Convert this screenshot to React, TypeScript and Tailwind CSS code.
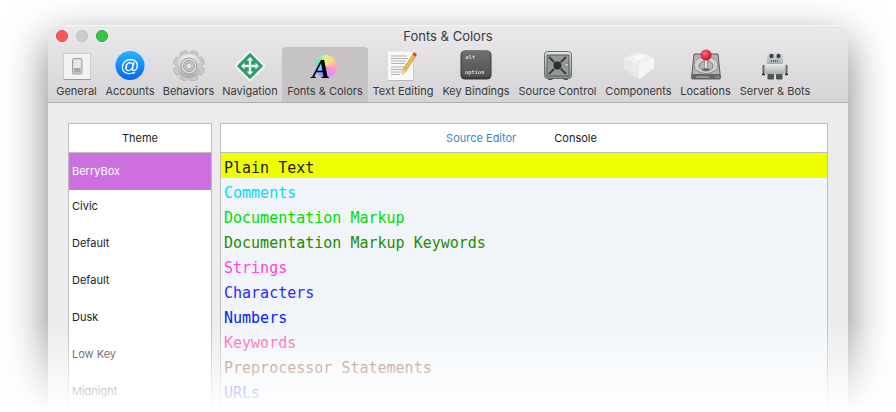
const ui = { fontFamily: "Inter, sans-serif" };

function General() {
  return (
    <svg width="32" height="32" viewBox="0 0 32 32">
      <rect x="2.5" y="4.5" width="27" height="26" fill="#f3f2f3" stroke="#cfcecf" />
      <path d="M2.5 30.5h27" stroke="#9c9b9c" />
      <rect x="11.5" y="9.5" width="9.5" height="15.5" rx="1" fill="#d4d4d4" stroke="#a2a2a2" />
      <rect x="13" y="11" width="6.5" height="8" fill="#e9e9e9" />
      <rect x="13" y="19" width="6.5" height="4.5" fill="#a8a8a8" />
    </svg>
  );
}

function Accounts() {
  return (
    <svg width="32" height="32" viewBox="0 0 32 32">
      <defs>
        <linearGradient id="acc" x1="0" y1="0" x2="0" y2="1">
          <stop offset="0" stopColor="#25b6ff" />
          <stop offset="1" stopColor="#0566f0" />
        </linearGradient>
      </defs>
      <circle cx="16" cy="16.5" r="14.5" fill="url(#acc)" />
      <text x="16" y="22.5" textAnchor="middle" fontSize="19" fill="#fff" fontFamily="Liberation Sans, sans-serif">@</text>
    </svg>
  );
}

function Behaviors() {
  const teeth = [22.5, 67.5, 112.5, 157.5, 202.5, 247.5, 292.5, 337.5];
  return (
    <svg width="32" height="32" viewBox="0 -1 32 32">
      <defs>
        <linearGradient id="gear" x1="0" y1="0" x2="0" y2="1">
          <stop offset="0" stopColor="#eeeeee" />
          <stop offset="1" stopColor="#a9a9a9" />
        </linearGradient>
      </defs>
      {teeth.map((a) => (
        <rect key={a} x="12" y="0.5" width="8" height="8" rx="2" fill="#c9c9c9" stroke="#9e9e9e" strokeWidth=".5" transform={`rotate(${a} 16 16)`} />
      ))}
      <circle cx="16" cy="16" r="12" fill="url(#gear)" />
      <circle cx="16" cy="16" r="8" fill="#dcdcdc" stroke="#a0a0a0" />
      <circle cx="16" cy="16" r="5.5" fill="#c6c6c6" stroke="#a0a0a0" />
      <circle cx="16" cy="16" r="3" fill="#e4e4e4" stroke="#adadad" />
    </svg>
  );
}

function Navigation() {
  return (
    <svg width="32" height="32" viewBox="0 -1 32 32">
      <rect x="5.7" y="5.7" width="20.6" height="20.6" rx="1" fill="#2f9a70" stroke="#f4f4f4" strokeWidth="2" transform="rotate(45 16 16)" />
      <path d="M16 7L19.5 10.5H17.2V14.8H21.5V12.5L25 16L21.5 19.5V17.2H17.2V21.5H19.5L16 25L12.5 21.5H14.8V17.2H10.5V19.5L7 16L10.5 12.5V14.8H14.8V10.5H12.5Z" fill="#e8f5ef" />
    </svg>
  );
}

function FontsColors() {
  return (
    <div className="relative w-8 h-8">
      <div className="absolute left-[6px] top-[6px] w-[22px] h-[23px] rounded-full bg-[conic-gradient(#e4f28a,#ffd08a,#ff9ac4,#e88aff,#9a8cff,#6fd0ff,#70eea0,#e4f28a)]" />
      <span className="absolute left-[3px] top-[7px] text-[27px] leading-[27px] font-bold italic text-black" style={{ fontFamily: "Liberation Serif, serif" }}>A</span>
    </div>
  );
}

function TextEditing() {
  return (
    <svg width="32" height="32" viewBox="0 0 32 32">
      <rect x="1.5" y="3" width="25" height="29" fill="#000" opacity=".15" />
      <rect x="1" y="2.5" width="25" height="28.5" fill="#f8f8f6" />
      <path d="M4 7h16M4 9.5h17M4 12h15M4 14.5h14M4 18h13M4 20.5h11M4 23h10M4 25.5h9" stroke="#a0a0a0" strokeWidth=".8" />
      <path d="M27 3.5l2.6 2-11 17-3.6 3 .6-4.6z" fill="#f2bd4a" stroke="#8e6a20" strokeWidth=".5" />
      <path d="M15 25.5l.6-4.6 3 1.6z" fill="#eed9b4" />
      <path d="M27 3.5l2.6 2-1.3 2-2.6-2z" fill="#d9323a" />
    </svg>
  );
}

function KeyBindings() {
  return (
    <svg width="32" height="32" viewBox="0 0 32 32">
      <defs>
        <linearGradient id="key" x1="0" y1="0" x2="0" y2="1">
          <stop offset="0" stopColor="#707070" />
          <stop offset="1" stopColor="#505050" />
        </linearGradient>
      </defs>
      <rect x="0.5" y="1.5" width="31" height="29" rx="4.5" fill="#3a3a3a" />
      <rect x="1.5" y="1.5" width="29" height="26.5" rx="4" fill="url(#key)" />
      <text x="5.5" y="9.5" fontSize="5.4" fontWeight="700" fill="#d6d6d6" fontFamily="DejaVu Sans Mono, monospace">alt</text>
      <text x="5" y="25" fontSize="5.4" fontWeight="700" fill="#d6d6d6" fontFamily="DejaVu Sans Mono, monospace">option</text>
    </svg>
  );
}

function SourceControl() {
  return (
    <svg width="32" height="32" viewBox="0 0 32 32">
      <defs>
        <linearGradient id="safe" x1="0" y1="0" x2="0" y2="1">
          <stop offset="0" stopColor="#dfe6e6" />
          <stop offset="1" stopColor="#8a8c8c" />
        </linearGradient>
      </defs>
      <rect x="2.5" y="2.5" width="27" height="27" rx="3" fill="url(#safe)" stroke="#6a6d6d" />
      <rect x="5" y="6" width="22" height="21" fill="#949a9a" stroke="#5a5d5d" />
      <path d="M7 8l17 17M24 8L7 25" stroke="#3c3e3e" strokeWidth="2" />
      <circle cx="15.5" cy="16.5" r="4.5" fill="#2f3131" stroke="#a4a8a8" strokeWidth=".7" />
      <circle cx="24.5" cy="16" r="1.7" fill="#d4d7d7" stroke="#555" strokeWidth=".5" />
      <rect x="6" y="29.5" width="4.5" height="1.5" fill="#5c5c5c" />
      <rect x="21.5" y="29.5" width="4.5" height="1.5" fill="#5c5c5c" />
    </svg>
  );
}

function Components() {
  return (
    <svg width="32" height="32" viewBox="0 0 32 32">
      <path d="M16 2.5L31 9v10L16 30 1 19V9z" fill="#f1f0f1" />
      <path d="M1 9l15 7.5V30L1 19z" fill="#ebeaeb" />
      <path d="M16 16.5V30L31 19V9z" fill="#f6f5f6" />
      <ellipse cx="16" cy="8" rx="6.5" ry="3.5" fill="#f8f8f8" stroke="#e2e1e2" strokeWidth=".6" />
    </svg>
  );
}

function Locations() {
  return (
    <svg width="32" height="32" viewBox="0 0 32 32">
      <defs>
        <radialGradient id="ball" cx=".4" cy=".35" r=".7">
          <stop offset="0" stopColor="#ff6a80" />
          <stop offset="1" stopColor="#c00a20" />
        </radialGradient>
      </defs>
      <path d="M4 5h24l2.5 24h-29z" fill="#b4b4b4" stroke="#5c5c5c" />
      <rect x="1.5" y="25" width="29" height="5.5" rx="1" fill="#666" />
      <path d="M6 28h13" stroke="#bcbcbc" strokeWidth="1" />
      <path d="M25 28h1.5" stroke="#8fa7d8" strokeWidth="1.2" />
      <path d="M27.5 28h1.5" stroke="#e8d060" strokeWidth="1.2" />
      <ellipse cx="16" cy="16" rx="12" ry="8.5" fill="#d2d2d2" stroke="#8a8a8a" />
      <ellipse cx="16" cy="17" rx="7" ry="5" fill="#b5b5b5" stroke="#808080" />
      <rect x="14.7" y="8" width="2.6" height="12" fill="#e2e2e2" stroke="#777" strokeWidth=".5" />
      <ellipse cx="16" cy="20.5" rx="3.5" ry="1.6" fill="#6c6c6c" />
      <circle cx="16" cy="6" r="5.5" fill="url(#ball)" />
    </svg>
  );
}

function ServerBots() {
  return (
    <svg width="32" height="32" viewBox="0 0 32 32">
      <defs>
        <linearGradient id="bot" x1="0" y1="0" x2="0" y2="1">
          <stop offset="0" stopColor="#e2eaea" />
          <stop offset="1" stopColor="#a4acac" />
        </linearGradient>
      </defs>
      <rect x="8" y="2" width="16" height="13" rx="1.5" fill="url(#bot)" />
      <circle cx="12.5" cy="7" r="2.2" fill="#3a4448" />
      <circle cx="19.5" cy="7" r="2.2" fill="#3a4448" />
      <path d="M12 12h8" stroke="#3a4448" strokeWidth="1.4" strokeDasharray="1 1" />
      <rect x="6" y="15" width="20" height="10.5" rx="3" fill="url(#bot)" />
      <path d="M4.5 16v9M27.5 16v9" stroke="#666" strokeWidth="2" />
      <path d="M3 25.5h3M26 25.5h3" stroke="#2a2a2a" strokeWidth="1.5" />
      <rect x="8.5" y="25" width="6.5" height="5.5" rx="1" fill="#4f5354" />
      <rect x="17" y="25" width="6.5" height="5.5" rx="1" fill="#4f5354" />
    </svg>
  );
}

const tabs = [
  { label: "General", width: "w-[49px]", Icon: General },
  { label: "Accounts", width: "w-[58px]", Icon: Accounts },
  { label: "Behaviors", width: "w-[59px]", Icon: Behaviors },
  { label: "Navigation", width: "w-[64px]", Icon: Navigation },
  { label: "Fonts & Colors", width: "w-[86px]", Icon: FontsColors, active: true },
  { label: "Text Editing", width: "w-[70px]", Icon: TextEditing },
  { label: "Key Bindings", width: "w-[76px]", Icon: KeyBindings },
  { label: "Source Control", width: "w-[87px]", Icon: SourceControl },
  { label: "Components", width: "w-[75px]", Icon: Components },
  { label: "Locations", width: "w-[59px]", Icon: Locations },
  { label: "Server & Bots", width: "w-[80px]", Icon: ServerBots },
];

const themes = [
  { name: "BerryBox", row: "h-[37px] bg-[#cc70e0] text-white" },
  { name: "Civic", row: "h-[35px] pb-[2px] text-[#222]" },
  { name: "Default", row: "h-[37px] text-[#222]" },
  { name: "Default", row: "h-[37px] text-[#222]" },
  { name: "Dusk", row: "h-[37px] text-[#222]" },
  { name: "Low Key", row: "h-[37px] text-[#222]" },
  { name: "Midnight", row: "h-[37px] text-[#222]" },
];

const lines = [
  { text: "Plain Text", cls: "text-[#222] bg-[#eeff00]" },
  { text: "Comments", cls: "text-[#00ddff]" },
  { text: "Documentation Markup", cls: "text-[#00dd00]" },
  { text: "Documentation Markup Keywords", cls: "text-[#1e8c00]" },
  { text: "Strings", cls: "text-[#ff44dd]" },
  { text: "Characters", cls: "text-[#2a2aff]" },
  { text: "Numbers", cls: "text-[#0022ff]" },
  { text: "Keywords", cls: "text-[#ff55aa]" },
  { text: "Preprocessor Statements", cls: "text-[#a86a50]" },
  { text: "URLs", cls: "text-[#2a2aff]" },
];

export default function App() {
  return (
    <div className="relative w-[896px] h-[412px] overflow-hidden bg-white pt-[25px] px-[48px]" style={ui}>
      <div className="w-[800px] h-[420px] flex flex-col rounded-t-[6px] bg-[#ececec] shadow-[0_16px_44px_rgba(0,0,0,0.5)]">
        <div className="rounded-t-[6px] bg-gradient-to-b from-[#ebe9eb] to-[#d5d3d5] border-b border-[#aeacae] shadow-[inset_0_1px_0_#f7f6f7]">
          <div className="relative h-[22px] pt-[2px] flex items-center justify-center text-[13px] text-[#3a3a3a]">
            <div className="absolute left-[8px] top-[5px] flex gap-2">
              <span className="w-3 h-3 rounded-full bg-[#fc5753] border border-[#df4744]" />
              <span className="w-3 h-3 rounded-full bg-[#cdcccd] border border-[#bebdbe]" />
              <span className="w-3 h-3 rounded-full bg-[#33c748] border border-[#27aa35]" />
            </div>
            Fonts &amp; Colors
          </div>
          <div className="flex pl-[4px] h-[55px]">
            {tabs.map(({ label, width, Icon, active }) => (
              <div key={label} className={`${width} flex flex-col items-center pt-[2px] rounded-t-[4px] ${active ? "bg-[#c5c3c5]" : ""}`}>
                <div className="blur-[0.4px]">
                  <Icon />
                </div>
                <span className="mt-[3px] text-[11px] leading-[14px] whitespace-nowrap text-[#3a3a3a]">{label}</span>
              </div>
            ))}
          </div>
        </div>
        <div className="flex gap-2 p-5">
          <div className="w-[144px] border border-[#bdbdbd] bg-white">
            <div className="h-[29px] flex items-center justify-center border-b border-[#bdbdbd] text-[11px] text-[#222]">Theme</div>
            {themes.map((t, i) => (
              <div key={i} className={`${t.row} flex items-center pl-[3px] text-[11px]`}>{t.name}</div>
            ))}
          </div>
          <div className="w-[608px] border border-[#bdbdbd] bg-[#f1f5f9]">
            <div className="h-[29px] flex items-center justify-center gap-[38px] pr-[5px] border-b border-[#bdbdbd] bg-white text-[11px]">
              <span className="text-[#3a87c8]">Source Editor</span>
              <span className="text-[#222]">Console</span>
            </div>
            {lines.map((l) => (
              <div key={l.text} className={`h-[25px] pl-[3px] pt-[3px] text-[15px] leading-[25px] ${l.cls}`} style={{ fontFamily: "DejaVu Sans Mono, monospace" }}>
                {l.text}
              </div>
            ))}
          </div>
        </div>
      </div>
      <div className="absolute inset-x-0 bottom-0 h-[90px] bg-gradient-to-b from-white/0 to-white pointer-events-none" />
    </div>
  );
}
